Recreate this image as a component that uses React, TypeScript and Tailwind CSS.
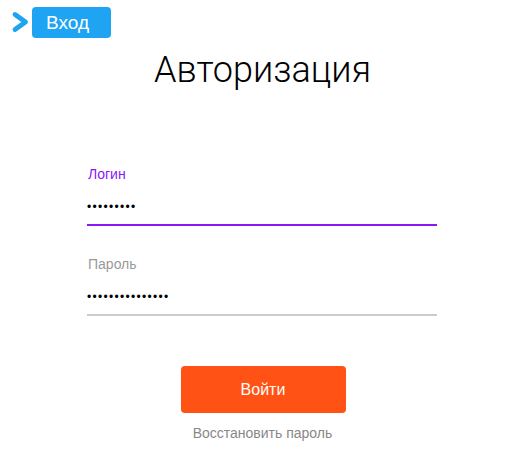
import React from "react";

export default function App() {
  return (
    <div className="w-[525px] h-[462px] bg-white font-['Liberation_Sans',Arial,sans-serif]">
      <div className="flex items-start pt-[7px] pl-[11px] gap-[2px]">
        <svg width="19" height="24" viewBox="0 0 19 24" className="mt-[3px]">
          <path d="M4 4.5 L14.5 12 L4 19.5" fill="none" stroke="#1ea4f2" strokeWidth="4.8" strokeLinecap="round" strokeLinejoin="round" />
        </svg>
        <div className="w-[79px] h-[31px] rounded-[4px] bg-[#1ea4f2] text-white text-[19px] leading-[31px] pl-[14px]">
          Вход
        </div>
      </div>
      <h1 className="text-center text-[36px] leading-[44px] mt-[10px] text-black font-['Roboto',sans-serif] font-light">
        Авторизация
      </h1>
      <div className="w-[350px] ml-[87px] mt-[74px]">
        <div className="text-[14px] leading-[16px] text-[#8a17f7] pl-[1px]">Логин</div>
        <div className="h-[42px] flex items-end pb-[11px] text-[12px] leading-[12px] text-black tracking-[1.3px]">
          •••••••••
        </div>
        <div className="h-[2px] bg-[#8a17f7]" />
        <div className="text-[14px] leading-[16px] text-[#999999] pl-[1px] mt-[30px]">Пароль</div>
        <div className="h-[42px] flex items-end pb-[11px] text-[12px] leading-[12px] text-black tracking-[1.3px]">
          •••••••••••••••
        </div>
        <div className="h-[2px] bg-[#cccccc]" />
      </div>
      <div className="flex flex-col items-center mt-[50px]">
        <button className="w-[165px] h-[47px] rounded-[4px] bg-[#ff5214] text-white text-[16px] ml-[1px]">Войти</button>
        <div className="mt-[12px] text-[14px] leading-[16px] text-[#888888]">Восстановить пароль</div>
      </div>
    </div>
  );
}
